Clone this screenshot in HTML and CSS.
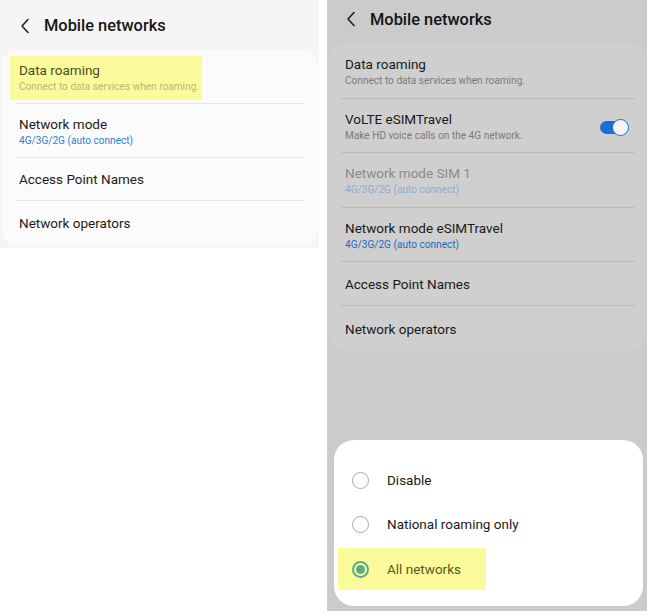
FILE: index.html
```html
<!DOCTYPE html>
<html>
<head>
<meta charset="utf-8">
<link rel="stylesheet" href="styles.css">
</head>
<body>
<div class="page">
  <section class="shot shot-left">
    <header class="appbar">
      <svg class="back" width="10" height="16" viewBox="0 0 10 16"><path d="M8 1.5 L2 8 L8 14.5" fill="none" stroke="#222" stroke-width="1.6" stroke-linecap="round" stroke-linejoin="round"/></svg>
      <h1 class="title">Mobile networks</h1>
    </header>
    <div class="card">
      <div class="row row-two">
        <div class="hl hl-row">
          <div class="r-title hl-title">Data roaming</div>
          <div class="r-sub hl-sub">Connect to data services when roaming.</div>
        </div>
      </div>
      <div class="row row-two">
        <div class="r-title">Network mode</div>
        <div class="r-sub blue">4G/3G/2G (auto connect)</div>
      </div>
      <div class="row row-one"><div class="r-title">Access Point Names</div></div>
      <div class="row row-one last"><div class="r-title">Network operators</div></div>
    </div>
  </section>

  <section class="shot shot-right">
    <header class="appbar appbar-r">
      <svg class="back" width="10" height="16" viewBox="0 0 10 16"><path d="M8 1.5 L2 8 L8 14.5" fill="none" stroke="#1e1e1e" stroke-width="1.6" stroke-linecap="round" stroke-linejoin="round"/></svg>
      <h1 class="title">Mobile networks</h1>
    </header>
    <div class="card card-r">
      <div class="row row-two">
        <div class="r-title">Data roaming</div>
        <div class="r-sub">Connect to data services when roaming.</div>
      </div>
      <div class="row row-two row-toggle">
        <div>
          <div class="r-title">VoLTE eSIMTravel</div>
          <div class="r-sub">Make HD voice calls on the 4G network.</div>
        </div>
        <span class="toggle"><span class="thumb"></span></span>
      </div>
      <div class="row row-two disabled">
        <div class="r-title">Network mode SIM 1</div>
        <div class="r-sub blue">4G/3G/2G (auto connect)</div>
      </div>
      <div class="row row-two">
        <div class="r-title">Network mode eSIMTravel</div>
        <div class="r-sub blue">4G/3G/2G (auto connect)</div>
      </div>
      <div class="row row-one"><div class="r-title">Access Point Names</div></div>
      <div class="row row-one last"><div class="r-title">Network operators</div></div>
    </div>

    <div class="sheet">
      <div class="opt"><span class="radio"></span><span class="opt-label">Disable</span></div>
      <div class="opt"><span class="radio"></span><span class="opt-label">National roaming only</span></div>
      <div class="opt opt-sel"><span class="radio radio-on"><span class="dot"></span></span><span class="opt-label">All networks</span></div>
    </div>
  </section>
</div>
</body>
</html>
```

FILE: styles.css
```css
* { box-sizing: border-box; }
html, body { margin: 0; padding: 0; background: #fff; }
body { font-family: Roboto, "Noto Sans", "Liberation Sans", sans-serif; }

.page {
  display: flex;
  align-items: flex-start;
  gap: 8px;
  width: 651px;
  height: 616px;
}

.shot { display: flex; flex-direction: column; }

.shot-left {
  width: 319px;
  height: 248px;
  background: #f5f5f5;
  padding: 0 1px 0 2px;
}

.shot-right {
  width: 320px;
  height: 611px;
  background: #cbcbcb;
  padding: 0 2px 0 2px;
}

.appbar {
  height: 50px;
  display: flex;
  align-items: center;
  padding-left: 18px;
  padding-top: 1px;
}
.appbar-r { height: 43px; padding-left: 17px; padding-top: 0; padding-bottom: 5px; }

.back { flex: none; margin-right: 14px; }
.title {
  margin: 0;
  font-size: 16.4px;
  font-weight: 500;
  color: #161616;
  letter-spacing: 0;
}
.appbar-r .title { color: #141414; }

.card {
  background: #fbfbfb;
  border-radius: 16px;
  padding: 0 13px 0 14px;
}
.card-r {
  background: #cfcfcf;
  padding: 0 10px 0 12px;
}

.row {
  border-bottom: 1px solid #e6e6e6;
  display: flex;
  flex-direction: column;
  justify-content: center;
  padding-left: 3px;
  padding-top: 1px;
}
.card-r .row { border-bottom-color: #bdbdbd; padding-left: 4px; }
.row.last { border-bottom: none; }

/* left card rows */
.card > .row:nth-child(1) { height: 54px; }
.card > .row:nth-child(2) { height: 54px; }
.card > .row:nth-child(3) { height: 43px; }
.card > .row:nth-child(4) { height: 44px; }

/* right card rows */
.card-r > .row:nth-child(1) { height: 56px; }
.card-r > .row:nth-child(2) { height: 54px; }
.card-r > .row:nth-child(3) { height: 55px; }
.card-r > .row:nth-child(4) { height: 54px; }
.card-r > .row:nth-child(5) { height: 44px; }
.card-r > .row:nth-child(6) { height: 45px; }

.r-title {
  font-size: 13.5px;
  color: #1c1c1c;
  line-height: 17px;
}
.card-r .r-title { color: #191919; }
.r-sub {
  font-size: 10.1px;
  color: #8c8c8c;
  line-height: 13px;
  margin-top: 1px;
}
.card-r .r-sub { color: #7b7b7b; }
.r-sub.blue { color: #2f80cf; }
.card-r .r-sub.blue { color: #1e6ac0; }

.disabled .r-title { color: #8a8a8a !important; }
.disabled .r-sub.blue { color: #8aaed0 !important; }

.hl {
  background: #fbfb9c;
}
.hl-row {
  align-self: flex-start;
  margin-left: -9px;
  padding: 6px 3px 7px 9px;
  margin-top: 1px;
}
.hl-title { color: #4b4b1e; }
.hl-sub { color: #b7b77a; }

.row-toggle {
  flex-direction: row;
  align-items: center;
  justify-content: space-between;
}
.toggle {
  position: relative;
  width: 28px;
  height: 13px;
  border-radius: 7px;
  background: #1a6fd6;
  margin-right: 7px;
  margin-top: 2px;
}
.thumb {
  position: absolute;
  right: -1px;
  top: -2px;
  width: 17px;
  height: 17px;
  border-radius: 50%;
  background: #f4f4f4;
  border: 1.5px solid #1a6fd6;
}

.sheet {
  margin-top: auto;
  margin-bottom: 5px;
  margin-left: 5px;
  margin-right: 2px;
  background: #fff;
  border-radius: 20px;
  padding: 18px 0 16px 4px;
  display: flex;
  flex-direction: column;
}
.opt {
  height: 44px;
  display: flex;
  align-items: center;
  padding-left: 14px;
  width: 148px;
}
.opt .opt-label { white-space: nowrap; }
.opt-sel { background: #fbfb9c; height: 42px; margin-top: 2px; }
.radio {
  flex: none;
  width: 17px;
  height: 17px;
  border-radius: 50%;
  border: 1.5px solid #a8a8a8;
  margin-right: 18px;
  display: flex;
  align-items: center;
  justify-content: center;
}
.radio-on { border-color: #5daa88; border-width: 2px; }
.dot { width: 9px; height: 9px; border-radius: 50%; background: #5daa88; }
.opt-label {
  font-size: 13.5px;
  color: #1a1a1a;
}
.opt-sel .opt-label { color: #58581f; }
```
